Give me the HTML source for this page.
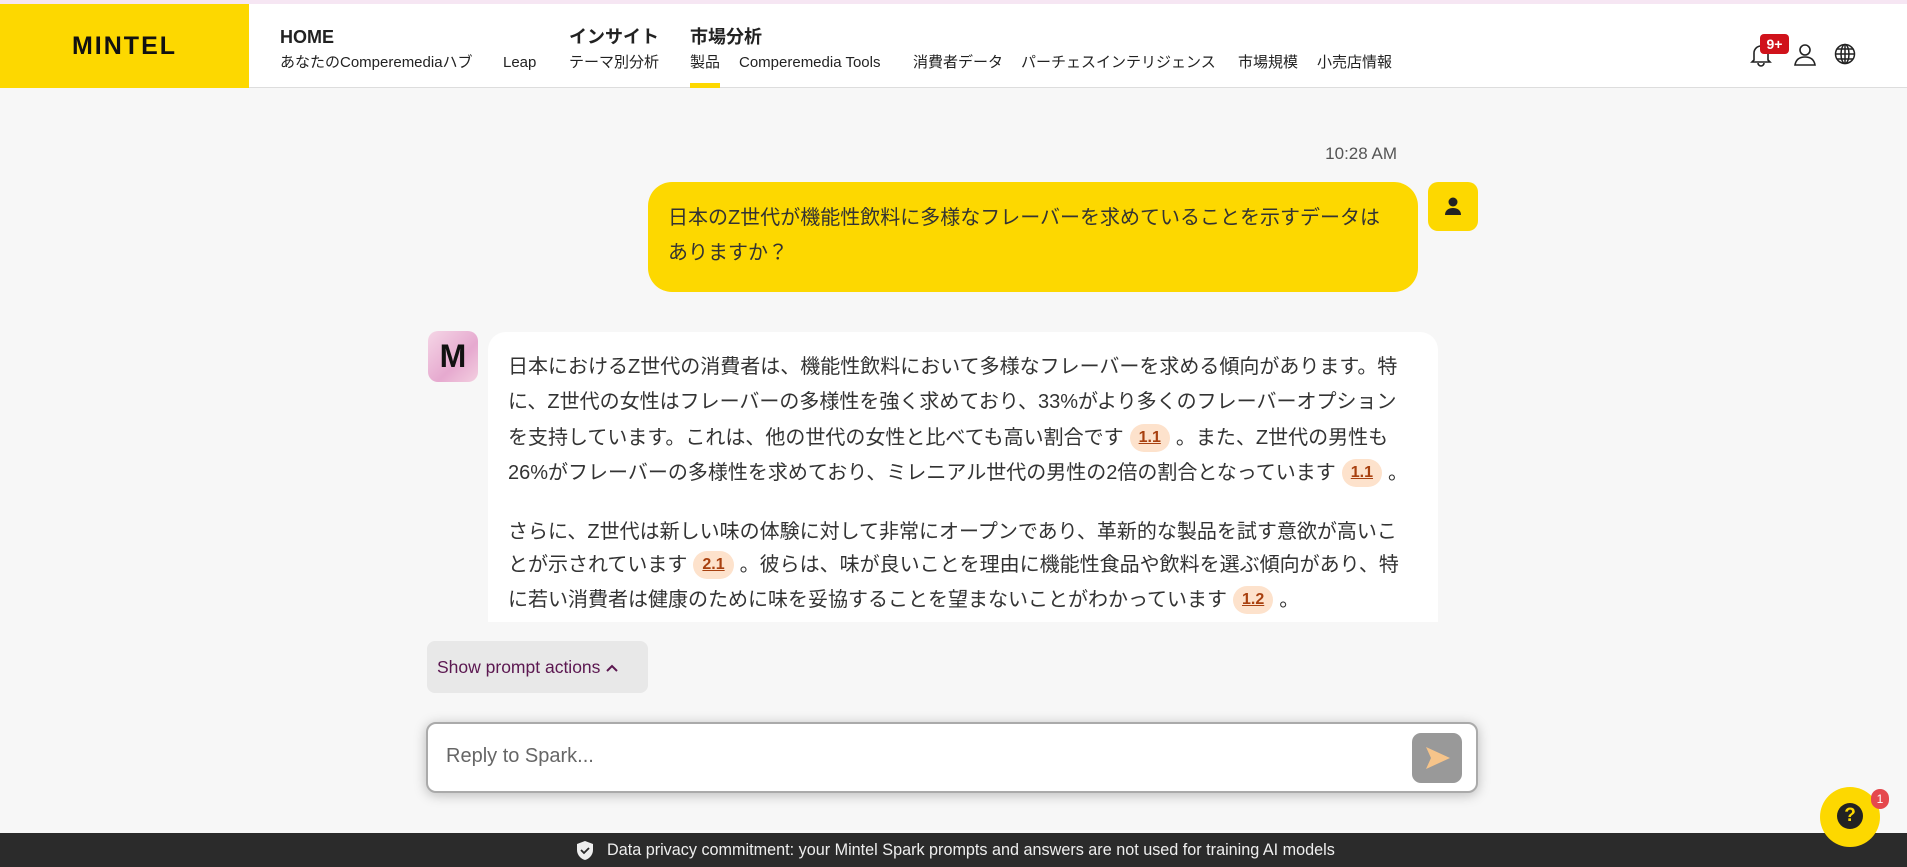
<!DOCTYPE html>
<html><head><meta charset="utf-8"><style>
*{margin:0;padding:0;box-sizing:border-box}
body{width:1907px;height:867px;overflow:hidden;background:#f7f7f7;font-family:"Liberation Sans","Noto Sans CJK JP",sans-serif;color:#333;position:relative}
.top{position:absolute;top:0;left:0;right:0;height:4px;background:#f6e6f3}
.hdr{position:absolute;top:4px;left:0;right:0;height:84px;background:#fff;border-bottom:1px solid #ddd}
.logo{position:absolute;left:0;top:0;width:249px;height:84px;background:#fdd800;font-weight:bold;font-size:25px;letter-spacing:2px;color:#111;line-height:84px;text-align:center}
.n{position:absolute;font-size:15px;color:#222;white-space:nowrap;line-height:22px;height:22px}
.b{position:absolute;font-size:18px;font-weight:bold;color:#222;white-space:nowrap;line-height:26px}
.abs{position:absolute}
.row{position:absolute;white-space:nowrap;font-size:20px;line-height:35px;color:#333}
.chip{display:inline-block;background:#fde2cc;color:#a8400f;font-weight:bold;text-decoration:underline;font-size:16px;border-radius:15px;padding:0 9px;line-height:28px;margin:0 6px;vertical-align:2px}
</style></head><body>
<div class="top"></div>
<div class="hdr">
<div class="logo">MINTEL</div>
<div class="b" style="left:280px;top:20px">HOME</div>
<div class="b" style="left:569px;top:20px">インサイト</div>
<div class="b" style="left:690px;top:20px">市場分析</div>
<div class="n" style="left:280px;top:48px">あなたのComperemediaハブ</div>
<div class="n" style="left:503px;top:48px">Leap</div>
<div class="n" style="left:569px;top:48px">テーマ別分析</div>
<div class="n" style="left:690px;top:48px">製品</div>
<div class="n" style="left:739px;top:48px">Comperemedia Tools</div>
<div class="n" style="left:913px;top:48px">消費者データ</div>
<div class="n" style="left:1021px;top:48px">パーチェスインテリジェンス</div>
<div class="n" style="left:1238px;top:48px">市場規模</div>
<div class="n" style="left:1317px;top:48px">小売店情報</div>
<div class="abs" style="left:690px;top:79px;width:30px;height:5px;background:#fdd800"></div>
<svg class="abs" style="left:1749px;top:38px" width="24" height="26" viewBox="0 0 24 26"><path d="M5 18V11a7 7 0 0 1 14 0v7l2 2H3z M9 21a3 3 0 0 0 6 0" fill="none" stroke="#222" stroke-width="1.6"/></svg>
<div class="abs" style="left:1760px;top:30px;width:29px;height:20px;background:#d0121b;border-radius:4px;color:#fff;font-weight:bold;font-size:14px;text-align:center;line-height:20px">9+</div>
<svg class="abs" style="left:1793px;top:38px" width="24" height="26" viewBox="0 0 24 26"><circle cx="12" cy="8" r="5" fill="none" stroke="#222" stroke-width="1.6"/><path d="M2 23c1-6 5-8 10-8s9 2 10 8z" fill="none" stroke="#222" stroke-width="1.6"/></svg>
<svg class="abs" style="left:1834px;top:39px" width="22" height="22" viewBox="0 0 22 22" fill="none" stroke="#222" stroke-width="1.5"><circle cx="11" cy="11" r="9.5"/><ellipse cx="11" cy="11" rx="4" ry="9.5"/><path d="M1.5 11h19M3 6h16M3 16h16M11 1.5v19"/></svg>
</div>
<div class="abs" style="left:1310px;top:144px;width:87px;text-align:right;font-size:17px;color:#555">10:28 AM</div>
<div class="abs" style="left:648px;top:182px;width:770px;height:110px;background:#fdd800;border-radius:24px"></div>
<div class="row" style="left:668px;top:201px;font-size:20px">日本のZ世代が機能性飲料に多様なフレーバーを求めていることを示すデータは</div>
<div class="row" style="left:668px;top:236px;font-size:20px">ありますか？</div>
<div class="abs" style="left:1428px;top:182px;width:50px;height:49px;background:#fdd800;border-radius:10px"></div>
<svg class="abs" style="left:1443px;top:196px" width="20" height="20" viewBox="0 0 20 20"><circle cx="10" cy="6" r="4.5" fill="#222"/><path d="M2 19c0-5 4-7 8-7s8 2 8 7z" fill="#222"/></svg>
<div class="abs" style="left:428px;top:331px;width:50px;height:51px;border-radius:10px;background:linear-gradient(135deg,#f5d6e6,#e6a9cf 60%,#f3cfe0);font-weight:900;font-size:32px;text-align:center;line-height:51px;color:#111">M</div>
<div class="abs" style="left:488px;top:332px;width:950px;height:290px;background:#fff;border-radius:18px 18px 0 0"></div>
<div class="row" style="left:508px;top:350px">日本におけるZ世代の消費者は、機能性飲料において多様なフレーバーを求める傾向があります。特</div>
<div class="row" style="left:508px;top:385px">に、Z世代の女性はフレーバーの多様性を強く求めており、33%がより多くのフレーバーオプション</div>
<div class="row" style="left:508px;top:421px">を支持しています。これは、他の世代の女性と比べても高い割合です<span class="chip">1.1</span>。また、Z世代の男性も</div>
<div class="row" style="left:508px;top:456px">26%がフレーバーの多様性を求めており、ミレニアル世代の男性の2倍の割合となっています<span class="chip">1.1</span>。</div>
<div class="row" style="left:508px;top:515px">さらに、Z世代は新しい味の体験に対して非常にオープンであり、革新的な製品を試す意欲が高いこ</div>
<div class="row" style="left:508px;top:548px">とが示されています<span class="chip">2.1</span>。彼らは、味が良いことを理由に機能性食品や飲料を選ぶ傾向があり、特</div>
<div class="row" style="left:508px;top:583px">に若い消費者は健康のために味を妥協することを望まないことがわかっています<span class="chip">1.2</span>。</div>
<div class="abs" style="left:0;top:622px;width:1907px;height:245px;background:#f7f7f7"></div>
<div class="abs" style="left:427px;top:641px;width:221px;height:52px;background:#e8e8e8;border-radius:8px;color:#5b1750;font-size:17.5px;line-height:52px;padding-left:10px;white-space:nowrap">Show prompt actions <svg width="14" height="10" viewBox="0 0 14 10" style="vertical-align:0"><path d="M2 8l5-5 5 5" fill="none" stroke="#5b1750" stroke-width="2"/></svg></div>
<div class="abs" style="left:426px;top:722px;width:1052px;height:71px;background:#fff;border:2px solid #aaa;border-radius:10px;box-shadow:0 2px 12px rgba(0,0,0,.25)"></div>
<div class="abs" style="left:446px;top:745px;font-size:20px;color:#666">Reply to Spark...</div>
<div class="abs" style="left:1412px;top:733px;width:50px;height:50px;background:#999;border-radius:9px"></div>
<svg class="abs" style="left:1425px;top:746px" width="26" height="24" viewBox="0 0 26 24"><path d="M1 1L25 12L1 23L6 12z" fill="#f6c48a"/></svg>
<div class="abs" style="left:0;top:833px;width:1907px;height:34px;background:#2b2b2b"></div>
<svg class="abs" style="left:576px;top:840px" width="18" height="21" viewBox="0 0 18 21"><path d="M9 1L17 4v6c0 5-4 9-8 10C5 19 1 15 1 10V4z" fill="#eee"/><path d="M5 10l3 3 5-5" stroke="#2b2b2b" stroke-width="1.8" fill="none"/></svg>
<div class="abs" style="left:607px;top:841px;font-size:16.2px;color:#eee;white-space:nowrap">Data privacy commitment: your Mintel Spark prompts and answers are not used for training AI models</div>
<div class="abs" style="left:1820px;top:787px;width:60px;height:60px;border-radius:50%;background:#fdd800"></div>
<div class="abs" style="left:1837px;top:803px;width:26px;height:26px;border-radius:50%;background:#222;color:#fdd800;font-weight:bold;font-size:19px;text-align:center;line-height:26px">?</div>
<div class="abs" style="left:1871px;top:789px;width:18px;height:20px;border-radius:9px;background:#e5484d;color:#fff;font-size:12px;text-align:center;line-height:20px">1</div>
</body></html>
